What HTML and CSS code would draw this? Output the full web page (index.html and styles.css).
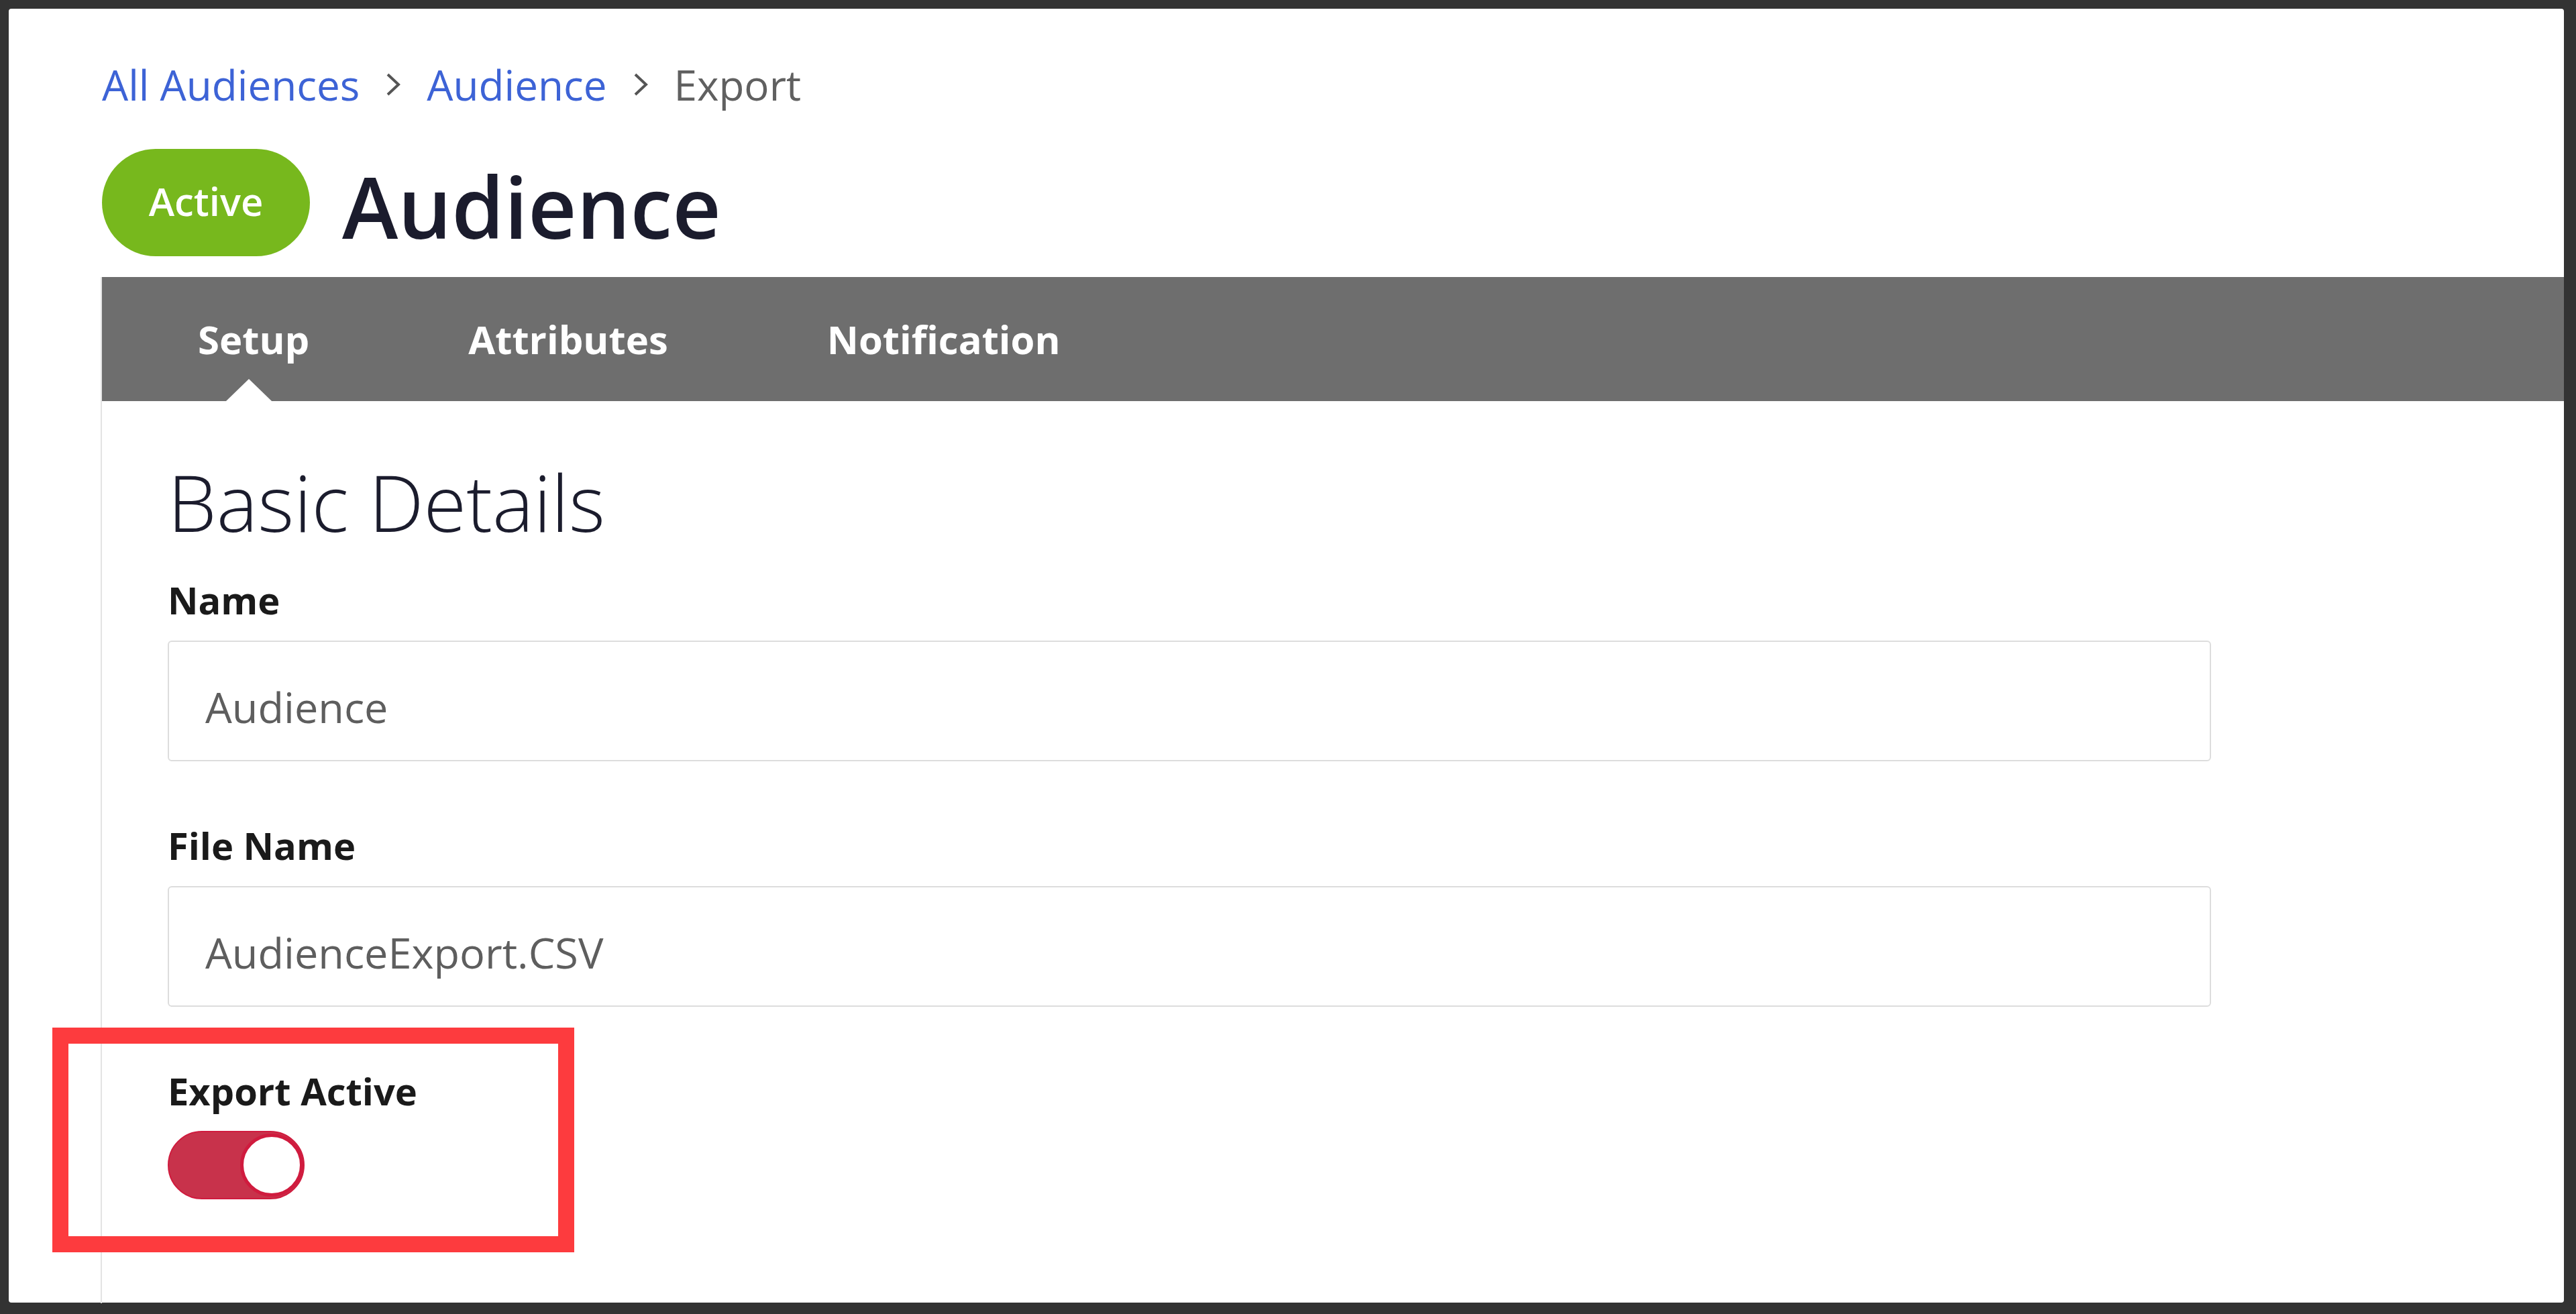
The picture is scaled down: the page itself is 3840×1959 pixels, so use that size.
FILE: index.html
```html
<!DOCTYPE html>
<html lang="en">
<head>
    <meta charset="UTF-8">
    <meta name="viewport" content="width=device-width, initial-scale=1.0">
    <title>Audience - Export</title>
    <link rel="stylesheet" href="styles.css">
</head>
<body>
    <div class="page">
        <!-- breadcrumb -->
        <div class="crumbs">
            <a class="crumb-link" href="#">All Audiences</a>
            <svg class="chevron" width="24" height="36" viewBox="0 0 24 36"><polyline points="4,3 20,18 4,33" fill="none" stroke="#555" stroke-width="4"/></svg>
            <a class="crumb-link" href="#">Audience</a>
            <svg class="chevron" width="24" height="36" viewBox="0 0 24 36"><polyline points="4,3 20,18 4,33" fill="none" stroke="#555" stroke-width="4"/></svg>
            <span class="crumb-current">Export</span>
        </div>

        <div class="header">
            <div class="status-pill">Active</div>
            <h1 class="title">Audience</h1>
        </div>

        <div class="panel">
            <div class="tabs">
                <div class="tab active">Setup</div>
                <div class="tab">Attributes</div>
                <div class="tab">Notification</div>
            </div>

            <div class="panel-body">
                <h2 class="section-title">Basic Details</h2>

                <div class="field-label">Name</div>
                <div class="field">Audience</div>

                <div class="field-label spaced">File Name</div>
                <div class="field">AudienceExport.CSV</div>

                <div class="field-label spaced">Export Active</div>
                <div class="toggle">
                    <div class="knob"></div>
                </div>
            </div>
        </div>

        <!-- annotation -->
        <div class="highlight-box"></div>
    </div>
</body>
</html>
```

FILE: styles.css
```css
* {
    box-sizing: border-box;
}
html, body {
    height: 100%;
}
body {
    margin: 0;
    padding: 13px 18px 17px 13px;
    background: #333333;
    font-family: 'Open Sans', Arial, sans-serif;
    overflow: hidden;
}
.page {
    position: relative;
    height: 100%;
    background: #fff;
    border-radius: 4px;
    padding: 71px 0 0 137px;
}
.crumbs {
    display: flex;
    align-items: center;
    gap: 38px;
    font-size: 62px;
    line-height: 84px;
    padding-left: 2px;
}
.crumb-link {
    color: #3d63d6;
    text-decoration: none;
}
.crumb-current {
    color: #606060;
}
.chevron {
    display: block;
}
.header {
    display: flex;
    align-items: center;
    gap: 48px;
    margin-top: 49px;
    padding-left: 2px;
}
.status-pill {
    width: 310px;
    height: 160px;
    border-radius: 80px;
    background: #77b81d;
    color: #fff;
    font-size: 58px;
    font-weight: 600;
    display: flex;
    align-items: center;
    justify-content: center;
    padding-bottom: 6px;
}
.title {
    margin: 0;
    font-size: 126px;
    font-weight: 600;
    line-height: 160px;
    padding-top: 10px;
    color: #1b1c2d;
}
.panel {
    margin-top: 26px;
    border-left: 2px solid #e3e3e3;
    height: 1530px;
}
.tabs {
    display: flex;
    gap: 237px;
    height: 185px;
    background: #6e6e6e;
    padding-left: 143px;
}
.tab {
    position: relative;
    color: #fff;
    font-size: 58px;
    font-weight: 700;
    line-height: 185px;
    padding-bottom: 4px;
}
.tab.active::after {
    content: "";
    position: absolute;
    left: 50%;
    bottom: 0;
    margin-left: -41px;
    border-left: 34px solid transparent;
    border-right: 34px solid transparent;
    border-bottom: 33px solid #fff;
}
.panel-body {
    padding: 73px 0 0 98px;
}
.section-title {
    margin: 0;
    font-size: 116px;
    font-weight: 300;
    line-height: 155px;
    color: #1b1c2d;
}
.field-label {
    margin-top: 30px;
    font-size: 56px;
    font-weight: 700;
    line-height: 76px;
    color: #1a1a1a;
}
.field-label.spaced {
    margin-top: 87px;
}
.field {
    width: 3046px;
    height: 180px;
    margin-top: 23px;
    border: 2px solid #dddddd;
    border-radius: 6px;
    padding: 16px 0 0 54px;
    display: flex;
    align-items: center;
    font-size: 63px;
    color: #5e5e5e;
}
.toggle {
    width: 204px;
    height: 102px;
    margin-top: 22px;
    border-radius: 51px;
    background: #c8324b;
    border: 2px solid #d01b3e;
    display: flex;
    align-items: center;
    justify-content: flex-end;
}
.knob {
    width: 94px;
    height: 94px;
    border-radius: 50%;
    background: #fff;
    border: 5px solid #d01b3e;
}
.highlight-box {
    position: absolute;
    left: 65px;
    top: 1519px;
    width: 778px;
    height: 335px;
    border: 24px solid #fd3b3e;
}
```
